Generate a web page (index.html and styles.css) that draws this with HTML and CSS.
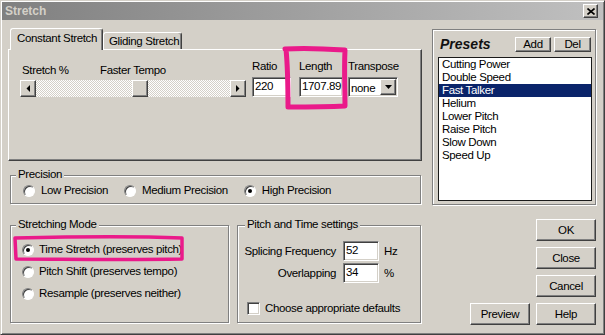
FILE: index.html
```html
<!DOCTYPE html>
<html lang="en">

<head>
    <meta charset="UTF-8">
    <meta name="viewport" content="width=device-width, initial-scale=1.0">
    <title>Stretch</title>
    <link rel="stylesheet" href="styles.css">
</head>

<body>
    <div class="dialog">
        <div class="titlebar">
            <span class="title">Stretch</span>
            <span class="close-btn">
                <svg width="8" height="7" viewBox="0 0 8 7">
                    <path d="M0.5 0.5 L7.5 6.5 M7.5 0.5 L0.5 6.5" stroke="#000" stroke-width="1.6" fill="none" />
                </svg>
            </span>
        </div>

        <div class="content">
            <div class="left">
                <div class="tabs">
                    <div class="tab tab-active">Constant Stretch</div>
                    <div class="tab tab-gliding">Gliding Stretch</div>
                </div>

                <div class="tab-panel">
                    <div class="slider-block">
                        <div class="slider-labels">
                            <span class="lbl-stretch">Stretch %</span>
                            <span>Faster Tempo</span>
                        </div>
                        <div class="scrollbar">
                            <span class="sb-btn">
                                <svg width="4" height="7" viewBox="0 0 4 7"><polygon points="4,0 4,7 0.5,3.5" fill="#000" /></svg>
                            </span>
                            <span class="sb-track"><span class="sb-thumb"></span></span>
                            <span class="sb-btn">
                                <svg width="4" height="7" viewBox="0 0 4 7"><polygon points="0,0 0,7 3.5,3.5" fill="#000" /></svg>
                            </span>
                        </div>
                    </div>

                    <div class="field field-ratio">
                        <span class="field-label">Ratio</span>
                        <div class="input">220</div>
                    </div>
                    <div class="field field-length">
                        <span class="field-label">Length</span>
                        <div class="input">1707.89</div>
                    </div>
                    <div class="field field-transpose">
                        <span class="field-label">Transpose</span>
                        <div class="select">
                            <span class="select-value">none</span>
                            <span class="select-btn">
                                <svg width="7" height="4" viewBox="0 0 7 4"><polygon points="0,0 7,0 3.5,4" fill="#000" /></svg>
                            </span>
                        </div>
                    </div>
                </div>

                <div class="group precision">
                    <span class="group-title">Precision</span>
                    <div class="radio-row">
                        <span class="option"><span class="radio"></span>Low Precision</span>
                        <span class="option"><span class="radio"></span>Medium Precision</span>
                        <span class="option"><span class="radio checked"></span>High Precision</span>
                    </div>
                </div>

                <div class="bottom-row">
                    <div class="group mode">
                        <span class="group-title">Stretching Mode</span>
                        <div class="radio-list">
                            <span class="option"><span class="radio checked"></span>Time Stretch (preserves pitch)</span>
                            <span class="option"><span class="radio"></span>Pitch Shift (preserves tempo)</span>
                            <span class="option"><span class="radio"></span>Resample (preserves neither)</span>
                        </div>
                    </div>

                    <div class="group pitch">
                        <span class="group-title">Pitch and Time settings</span>
                        <div class="pitch-row row-first">
                            <span class="pitch-label">Splicing Frequency</span>
                            <div class="input">52</div>
                            <span class="unit">Hz</span>
                        </div>
                        <div class="pitch-row">
                            <span class="pitch-label">Overlapping</span>
                            <div class="input">34</div>
                            <span class="unit">%</span>
                        </div>
                        <div class="check-row">
                            <span class="checkbox"></span>
                            <span>Choose appropriate defaults</span>
                        </div>
                    </div>
                </div>
            </div>

            <div class="right">
                <div class="presets">
                    <div class="presets-head">
                        <span class="presets-title">Presets</span>
                        <span class="btn btn-small btn-add">Add</span>
                        <span class="btn btn-small btn-del">Del</span>
                    </div>
                    <ul class="preset-list">
                        <li>Cutting Power</li>
                        <li>Double Speed</li>
                        <li class="selected">Fast Talker</li>
                        <li>Helium</li>
                        <li>Lower Pitch</li>
                        <li>Raise Pitch</li>
                        <li>Slow Down</li>
                        <li>Speed Up</li>
                    </ul>
                </div>

                <div class="actions">
                    <div class="btn">OK</div>
                    <div class="btn">Close</div>
                    <div class="btn">Cancel</div>
                    <div class="btn-row">
                        <div class="btn">Preview</div>
                        <div class="btn">Help</div>
                    </div>
                </div>
            </div>
        </div>
    </div>

    <!-- hand drawn highlight marks -->
    <svg class="marks" width="605" height="335" viewBox="0 0 605 335">
        <path d="M285 49 C300 48 330 49 345 50 C344 70 345 90 345 106 C325 107 305 107 288 107 C288 90 288 70 286 49"
            stroke="#ea1a8a" stroke-width="5" fill="none" stroke-linejoin="round" stroke-linecap="round" />
        <path d="M15 238 C60 237 130 236 182 238 L182 259 C120 260 60 259 16 259 Z" stroke="#ea1a8a"
            stroke-width="3.5" fill="none" stroke-linejoin="round" />
    </svg>
</body>

</html>
```

FILE: styles.css
```css
* {
    margin: 0;
    padding: 0;
    box-sizing: border-box;
}

body {
    position: relative;
    width: 605px;
    height: 335px;
    overflow: hidden;
    background: #d4d0c8;
    font-family: "Liberation Sans", Arial, sans-serif;
    font-size: 11.5px;
    letter-spacing: -0.35px;
    line-height: 13px;
    color: #000;
}

.dialog {
    width: 605px;
    height: 335px;
    padding: 1px;
    border: 1px solid;
    border-color: #d4d0c8 #404040 #404040 #d4d0c8;
    box-shadow: inset 1px 1px 0 #fff, inset -1px -1px 0 #808080;
}

/* title bar */
.titlebar {
    display: flex;
    align-items: center;
    justify-content: space-between;
    height: 18px;
    padding: 0 5px 0 3px;
    background: linear-gradient(to right, #808080, #c0c0c0);
}

.title {
    font-size: 12px;
    font-weight: bold;
    letter-spacing: 0;
    color: #d4d0c8;
}

.close-btn {
    display: flex;
    align-items: center;
    justify-content: center;
    width: 15px;
    height: 14px;
    background: #d4d0c8;
    border: 1px solid;
    border-color: #fff #404040 #404040 #fff;
    box-shadow: inset -1px -1px 0 #808080;
}

.content {
    display: grid;
    grid-template-columns: 414px 165px;
    column-gap: 10px;
    padding: 0 6px;
}

/* tabs */
.tabs {
    position: relative;
    z-index: 1;
    display: flex;
    align-items: flex-end;
    height: 21px;
    margin-top: 8px;
    padding-left: 2px;
}

.tab {
    height: 17px;
    padding: 2px 0 0 5px;
    background: #d4d0c8;
    border: 1px solid;
    border-bottom: 0;
    border-color: #fff #404040 #fff #fff;
    box-shadow: inset -1px 0 0 #808080;
    border-radius: 3px 3px 0 0;
    white-space: nowrap;
}

.tab-active {
    width: 93px;
    height: 22px;
    margin-bottom: -1px;
    padding: 3px 0 0 6px;
}

.tab-gliding {
    width: 79px;
}

.tab-panel {
    display: flex;
    align-items: flex-start;
    height: 112px;
    padding: 10px 0 0 11px;
    border: 1px solid;
    border-color: #fff #404040 #404040 #fff;
    box-shadow: inset -1px -1px 0 #808080;
}

/* slider */
.slider-block {
    width: 226px;
    margin-top: 4px;
}

.slider-labels {
    display: flex;
    padding-left: 2px;
    white-space: nowrap;
}

.lbl-stretch {
    width: 78px;
}

.scrollbar {
    display: flex;
    height: 17px;
    margin-top: 3px;
}

.sb-btn,
.sb-thumb,
.select-btn,
.btn {
    background: #d4d0c8;
    border: 1px solid;
    border-color: #fff #404040 #404040 #fff;
    box-shadow: inset -1px -1px 0 #808080;
}

.sb-btn {
    display: flex;
    align-items: center;
    justify-content: center;
    width: 16px;
    height: 17px;
}

.sb-track {
    flex: 1;
    background: repeating-conic-gradient(#fff 0 25%, #d4d0c8 0 50%) 0 0 / 2px 2px;
}

.sb-thumb {
    display: block;
    width: 16px;
    height: 17px;
    margin-left: 96px;
}

/* text fields */
.field {
    display: flex;
    flex-direction: column;
    gap: 4px;
    white-space: nowrap;
}

.field-ratio {
    width: 39px;
    margin-left: 6px;
}

.field-length {
    width: 44px;
    margin-left: 8px;
}

.field-transpose {
    width: 50px;
    margin-left: 5px;
}

.input,
.select,
.checkbox {
    background: #fff;
    border: 1px solid;
    border-color: #808080 #fff #fff #808080;
    box-shadow: inset 1px 1px 0 #404040, inset -1px -1px 0 #d4d0c8;
}

.input {
    height: 20px;
    padding: 2px 0 0 2px;
    overflow: hidden;
    white-space: nowrap;
}

.select {
    display: flex;
    height: 20px;
    padding: 1px 1px 1px 2px;
}

.select-value {
    flex: 1;
    padding-top: 3px;
    overflow: hidden;
}

.select-btn {
    display: flex;
    flex: none;
    align-items: center;
    justify-content: center;
    width: 16px;
    height: 16px;
}

/* group boxes */
.group {
    border: 1px solid #808080;
    box-shadow: inset 1px 1px 0 #fff, 1px 1px 0 #fff;
}

.group-title {
    display: table;
    margin: -8px 0 0 5px;
    padding: 0 2px;
    background: #d4d0c8;
    white-space: nowrap;
}

.precision {
    height: 29px;
    margin: 14px 1px 0 2px;
}

.radio-row {
    display: flex;
    gap: 16px;
    margin-top: 3px;
    padding-left: 12px;
}

.option {
    display: flex;
    align-items: center;
    gap: 6px;
    height: 13px;
    white-space: nowrap;
}

.radio {
    position: relative;
    flex: none;
    width: 12px;
    height: 12px;
    background: #fff;
    border: 1px solid;
    border-color: #808080 #fff #fff #808080;
    border-radius: 50%;
    box-shadow: inset 1px 1px 0 #404040;
}

.radio.checked::after {
    content: "";
    position: absolute;
    left: 3px;
    top: 3px;
    width: 4px;
    height: 4px;
    border-radius: 50%;
    background: #000;
}

.bottom-row {
    display: flex;
    margin-top: 21px;
}

.mode {
    width: 219px;
    height: 98px;
    margin-left: 2px;
}

.radio-list {
    display: flex;
    flex-direction: column;
    gap: 9px;
    margin-top: 12px;
    padding-left: 11px;
}

.radio-list .option {
    gap: 5px;
}

.pitch {
    width: 184px;
    height: 98px;
    margin-left: 8px;
}

.pitch .group-title {
    margin-left: 7px;
}

.pitch-row {
    display: flex;
    align-items: center;
    height: 20px;
    margin: 2px 0 0 9px;
}

.pitch-row.row-first {
    margin-top: 10px;
}

.pitch-label {
    display: flex;
    justify-content: flex-end;
    width: 89px;
    white-space: nowrap;
}

.pitch-row .input {
    width: 36px;
    margin-left: 7px;
}

.unit {
    margin-left: 5px;
}

.check-row {
    display: flex;
    align-items: center;
    gap: 5px;
    height: 13px;
    margin: 19px 0 0 9px;
    white-space: nowrap;
}

.checkbox {
    flex: none;
    width: 13px;
    height: 13px;
}

/* presets */
.presets {
    width: 164px;
    height: 176px;
    margin-top: 9px;
    padding: 7px 4px 0 5px;
    border: 1px solid #808080;
    box-shadow: inset 1px 1px 0 #fff, 1px 1px 0 #fff;
}

.presets-head {
    display: flex;
    align-items: center;
    height: 15px;
}

.presets-title {
    margin-left: 2px;
    font-size: 14px;
    font-weight: bold;
    font-style: italic;
    letter-spacing: 0;
    color: #111;
}

.btn {
    display: flex;
    align-items: center;
    justify-content: center;
    width: 60px;
    height: 22px;
}

.btn-small {
    height: 15px;
}

.btn-add {
    width: 36px;
    margin-left: auto;
}

.btn-del {
    width: 37px;
    margin-left: 3px;
}

.preset-list {
    list-style: none;
    width: 154px;
    height: 144px;
    margin-top: 5px;
    background: #fff;
    border: 1px solid #1a1a1a;
}

.preset-list li {
    height: 13px;
    padding-left: 3px;
    white-space: nowrap;
}

.preset-list li.selected {
    background: #0a246a;
    color: #fff;
}

.actions {
    display: flex;
    flex-direction: column;
    align-items: flex-end;
    gap: 6px;
    margin-top: 14px;
    padding-right: 1px;
}

.btn-row {
    display: flex;
    gap: 6px;
}

.marks {
    position: absolute;
    left: 0;
    top: 0;
    pointer-events: none;
}
```
